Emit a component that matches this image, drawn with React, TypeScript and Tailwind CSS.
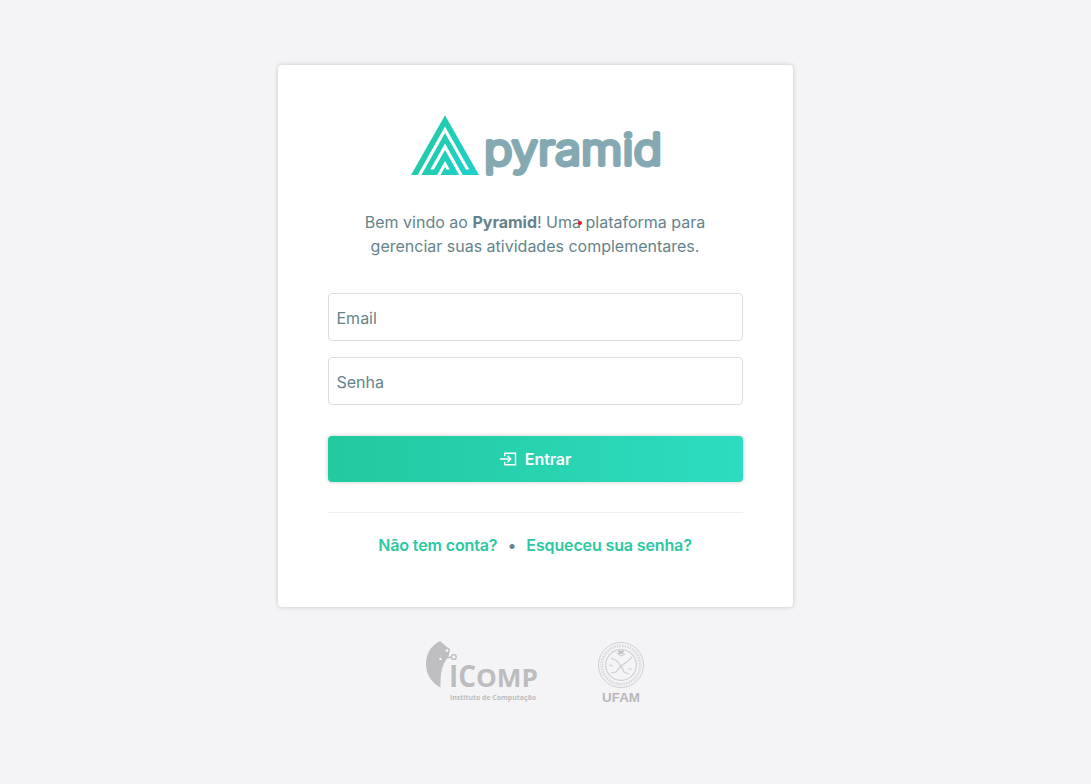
const PyramidLogo = () => (
  <svg width="250" height="62" viewBox="0 0 250 62" className="block" role="img" aria-label="pyramid">
    <defs>
      <linearGradient id="peak" x1="0" y1="0" x2="1" y2="0.4">
        <stop offset="0" stopColor="#26c99b" />
        <stop offset="1" stopColor="#1fcfc8" />
      </linearGradient>
    </defs>
    <path d="M34 .3 68 60H0Z" fill="url(#peak)" />
    <g fill="white">
      <path d="M6.6 60.2 34 11.5 58.3 54.5H54.9L34 18 10.2 60.2Z" />
      <path d="M19.3 54.5 34 28.5 51.9 60.2H48.3L34 35 22.9 54.5Z" />
      <path d="M26 60.2 34 46 38.8 54.5H35.4L34 52 29.4 60.2Z" />
    </g>
    <text
      x="73" y="50" textLength="178" lengthAdjust="spacingAndGlyphs"
      fill="#84a9b3" stroke="#84a9b3" strokeWidth="3.8" strokeLinejoin="round"
      fontFamily="Inter, sans-serif" fontWeight="300" fontSize="43.5"
    >pyramid</text>
  </svg>
);

const EnterIcon = () => (
  <svg width="17" height="14" viewBox="0 0 17 14" fill="none" stroke="white" strokeWidth="1.4">
    <path d="M4.7 4.3V1.2h10.8v11.6H4.7V9.7M0 7h10.5M7.5 3.7 10.8 7l-3.3 3.3" />
  </svg>
);

const IcompLogo = () => (
  <svg width="114" height="62" viewBox="0 0 114 62" role="img" aria-label="IComp">
    <path d="M14 0C4 5 0 14 0 23c0 11 6 19 14.5 23.5 0-11 .5-18 4-25L23 14V8Z" fill="#bfbfc1" />
    <path d="m17 17 10-1M17 18l4-8" stroke="#bdbdbf" strokeWidth="1.4" />
    <g fill="#f4f4f7" stroke="#bdbdbf" strokeWidth="1.4">
      <circle cx="21" cy="9.5" r="2.2" />
      <circle cx="27.8" cy="16" r="2.4" />
      <circle cx="14.5" cy="18" r="2" />
    </g>
    <g fill="#bdbdbf" fontFamily="'Open Sans', sans-serif" fontWeight="700">
      <text x="23" y="46" fontSize="31" textLength="27" lengthAdjust="spacingAndGlyphs">IC</text>
      <text x="50" y="46" fontSize="25" textLength="62" lengthAdjust="spacingAndGlyphs">OMP</text>
      <text x="24" y="58.5" fontSize="7" textLength="86" lengthAdjust="spacingAndGlyphs">Instituto de Computação</text>
    </g>
  </svg>
);

const UfamLogo = () => (
  <svg width="48" height="62" viewBox="0 0 48 62" role="img" aria-label="UFAM">
    <g fill="none" stroke="#cfcfd1">
      <circle cx="24" cy="24" r="22.5" strokeWidth="1" />
      <circle cx="24" cy="24" r="19.2" strokeWidth="2.8" strokeDasharray="1.5 1.1" opacity=".7" />
      <circle cx="24" cy="24" r="15.3" strokeWidth="1.2" />
      <path d="m14 17 6 3 4 5 7-5 4-4M24 25l-5 6-5 1M24 25l3 6 5 2M20 12l4 3 4-2M31 28h4M12 24l4 1" strokeWidth="1.2" />
    </g>
    <path d="m21 9 3 1 3-1-1 4h-4Z" fill="#c3c3c5" />
    <text x="5" y="60.5" fill="#b8b8bb" fontFamily="'Liberation Sans', sans-serif" fontWeight="700" fontSize="13" textLength="38" lengthAdjust="spacingAndGlyphs">UFAM</text>
  </svg>
);

const fieldClass =
  "block h-12 w-full rounded border border-[#d9dee0] bg-white px-[7.5px] pt-0.5 text-base text-[#65838a] outline-none placeholder:text-[#65838a] placeholder:opacity-100";

export default function App() {
  return (
    <main className="flex h-[784px] flex-col items-center bg-[#f4f4f7] pt-[65px] pr-5 font-['Inter',sans-serif] text-base text-[#65838a]">
      <section className="flex h-[542px] w-[515px] flex-col rounded bg-white px-[50px] pt-[50px] shadow-[0_0_4px_rgba(60,60,40,0.25)]">
        <div className="flex justify-center">
          <PyramidLogo />
        </div>
        <p className="relative mt-[33px] pr-px text-center leading-6">
          Bem vindo ao <strong className="font-bold">Pyramid</strong>! Uma plataforma para
          <br />
          gerenciar suas atividades complementares.
          <span className="absolute top-[10.5px] left-[250px] size-1 rounded-full bg-[#e01828]" />
        </p>
        <form className="mt-[35px]" onSubmit={(e) => e.preventDefault()}>
          <div className="flex flex-col gap-4">
            <input className={fieldClass} type="email" placeholder="Email" />
            <input className={fieldClass} type="password" placeholder="Senha" />
          </div>
          <button className="mt-[31px] flex h-[46px] w-full items-center justify-center gap-2 rounded bg-linear-to-r from-[#23c99f] to-[#2ddcc0] font-semibold tracking-[-0.1px] text-white shadow-[0_0_4px_rgba(0,0,0,0.22)]">
            <EnterIcon />
            Entrar
          </button>
        </form>
        <div className="mt-[30px] flex justify-center border-t border-[#eceeef] pt-5 pr-px font-semibold leading-6 tracking-[-0.13px] text-[#2bc8a2]">
          <a href="#conta">Não tem conta?</a>
          <span className="mx-[10.5px] text-[#65838a]">•</span>
          <a href="#senha">Esqueceu sua senha?</a>
        </div>
      </section>
      <footer className="mt-[34px] flex justify-center gap-[57px]">
        <IcompLogo />
        <UfamLogo />
      </footer>
    </main>
  );
}
